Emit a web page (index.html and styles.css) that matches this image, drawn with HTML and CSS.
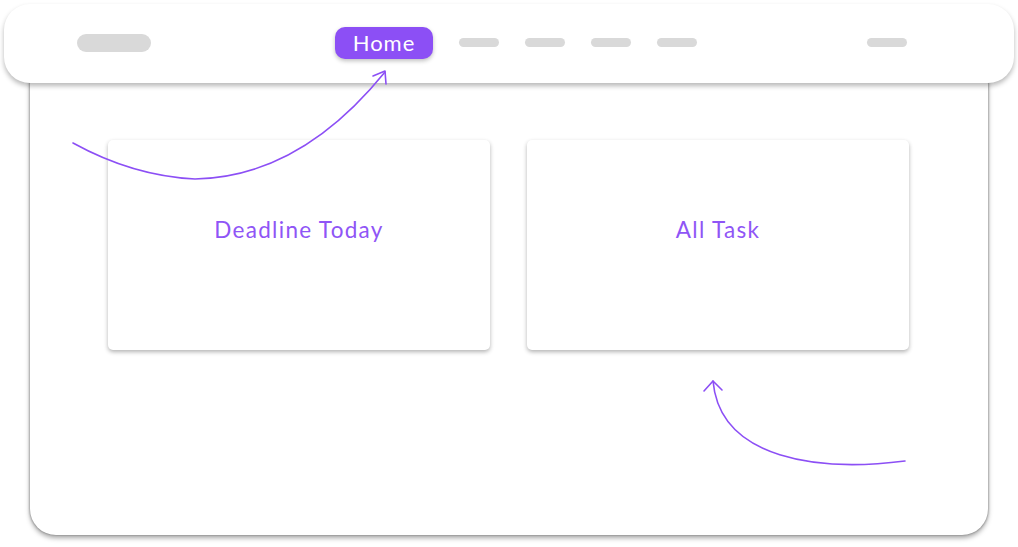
FILE: index.html
```html
<!DOCTYPE html>
<html lang="en">
<head>
  <meta charset="UTF-8">
  <meta name="viewport" content="width=device-width, initial-scale=1.0">
  <title>Task Board Wireframe</title>
  <link rel="stylesheet" href="styles.css">
</head>
<body>

  <div class="stage">
    <!-- Top navigation bar -->
    <header class="topbar">
      <span class="pill pill-logo"></span>
      <nav class="nav">
        <a href="#" class="nav-active">Home</a>
        <span class="pill pill-link"></span>
        <span class="pill pill-link"></span>
        <span class="pill pill-link"></span>
        <span class="pill pill-link"></span>
      </nav>
      <span class="pill pill-link pill-end"></span>
    </header>

    <!-- Page panel -->
    <main class="panel">
      <section class="card">Deadline Today</section>
      <section class="card">All Task</section>
    </main>

    <!-- Annotation arrows -->
    <svg class="arrows" width="1018" height="547" viewBox="0 0 1018 547">
      <path d="M73,143 Q133,176 195,179 Q300,177 385,72" />
      <path d="M373,76 L385,71 L386,84" />
      <path d="M905,461 C820,472 720,460 713,381" />
      <path d="M704,391 L713,381 L722,390" />
    </svg>
  </div>

</body>
</html>
```

FILE: styles.css
```css
* {
  box-sizing: border-box;
}

body {
  margin: 0;
  padding: 0;
  background: #fff;
  font-family: 'Lato', 'Open Sans', sans-serif;
}

.stage {
  position: relative;
  width: 1018px;
  height: 547px;
  padding-top: 4px;
}

.topbar {
  position: relative;
  z-index: 2;
  display: flex;
  align-items: center;
  height: 79px;
  margin: 0 4px;
  padding: 0 107px 0 73px;
  background: #fff;
  border-radius: 26px;
  box-shadow: 0 3px 5px rgba(0,0,0,0.28);
}

.pill {
  display: block;
  background: #d9d9d9;
}

.pill-logo {
  width: 74px;
  height: 18px;
  border-radius: 9px;
  margin-top: -2px;
}

.pill-link {
  width: 40px;
  height: 9px;
  border-radius: 5px;
}

.pill-end {
  margin-left: auto;
  margin-top: -2px;
}

.nav {
  display: flex;
  align-items: center;
  gap: 26px;
  margin-left: 184px;
  margin-top: -2px;
}

.nav-active {
  display: flex;
  align-items: center;
  justify-content: center;
  width: 98px;
  height: 32px;
  border-radius: 10px;
  background: #8c4ff5;
  color: #fff;
  font-size: 22px;
  letter-spacing: 1px;
  text-decoration: none;
  box-shadow: 0 2px 4px rgba(0,0,0,0.25);
}

.panel {
  position: relative;
  z-index: 1;
  display: grid;
  grid-template-columns: 382px 382px;
  gap: 37px;
  align-content: start;
  height: 477px;
  margin: -25px 30px 0;
  padding: 82px 0 0 78px;
  background: #fff;
  border-radius: 26px;
  box-shadow: 0 3px 5px rgba(0,0,0,0.35), -1px 0 2px rgba(0,0,0,0.2), 1px 0 2px rgba(0,0,0,0.2);
}

.card {
  height: 210px;
  padding-top: 76px;
  text-align: center;
  color: #8f55f6;
  font-size: 22.5px;
  letter-spacing: 1.3px;
  background: #fff;
  border-radius: 5px;
  box-shadow: 0 2px 4px rgba(0,0,0,0.3);
}

.arrows {
  position: absolute;
  top: 0;
  left: 0;
  z-index: 3;
  pointer-events: none;
}

.arrows path {
  fill: none;
  stroke: #8c4ff5;
  stroke-width: 1.6;
  stroke-linecap: round;
  stroke-linejoin: round;
}
```
